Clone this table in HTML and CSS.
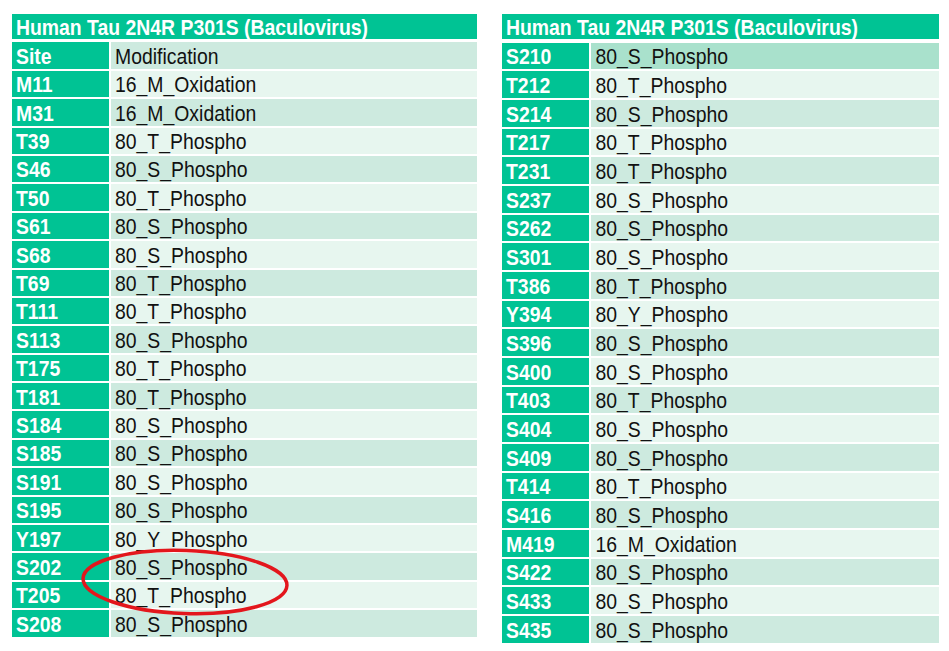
FILE: index.html
```html
<!DOCTYPE html>
<html lang="en">
<head>
<meta charset="utf-8">
<title>Human Tau 2N4R P301S (Baculovirus)</title>
<link rel="stylesheet" href="styles.css">
</head>
<body>
<div class="page">
  <div class="sheet sheet-left">
    <div class="title"><span>Human Tau 2N4R P301S (Baculovirus)</span></div>
    <div class="site"><span>Site</span></div><div class="mod dark"><span>Modification</span></div>
    <div class="site"><span>M11</span></div><div class="mod light"><span>16_M_Oxidation</span></div>
    <div class="site"><span>M31</span></div><div class="mod dark"><span>16_M_Oxidation</span></div>
    <div class="site"><span>T39</span></div><div class="mod light"><span>80_T_Phospho</span></div>
    <div class="site"><span>S46</span></div><div class="mod dark"><span>80_S_Phospho</span></div>
    <div class="site"><span>T50</span></div><div class="mod light"><span>80_T_Phospho</span></div>
    <div class="site"><span>S61</span></div><div class="mod dark"><span>80_S_Phospho</span></div>
    <div class="site"><span>S68</span></div><div class="mod light"><span>80_S_Phospho</span></div>
    <div class="site"><span>T69</span></div><div class="mod dark"><span>80_T_Phospho</span></div>
    <div class="site"><span>T111</span></div><div class="mod light"><span>80_T_Phospho</span></div>
    <div class="site"><span>S113</span></div><div class="mod dark"><span>80_S_Phospho</span></div>
    <div class="site"><span>T175</span></div><div class="mod light"><span>80_T_Phospho</span></div>
    <div class="site"><span>T181</span></div><div class="mod dark"><span>80_T_Phospho</span></div>
    <div class="site"><span>S184</span></div><div class="mod light"><span>80_S_Phospho</span></div>
    <div class="site"><span>S185</span></div><div class="mod dark"><span>80_S_Phospho</span></div>
    <div class="site"><span>S191</span></div><div class="mod light"><span>80_S_Phospho</span></div>
    <div class="site"><span>S195</span></div><div class="mod dark"><span>80_S_Phospho</span></div>
    <div class="site"><span>Y197</span></div><div class="mod light"><span>80_Y_Phospho</span></div>
    <div class="site"><span>S202</span></div><div class="mod dark"><span>80_S_Phospho</span></div>
    <div class="site"><span>T205</span></div><div class="mod light"><span>80_T_Phospho</span></div>
    <div class="site"><span>S208</span></div><div class="mod dark"><span>80_S_Phospho</span></div>
    <svg class="mark" width="465" height="640" viewBox="0 0 465 640" aria-hidden="true">
      <ellipse cx="173" cy="568" rx="102" ry="31.5" fill="none" stroke="#e3161c" stroke-width="3.5" transform="rotate(2 173 568)"/>
    </svg>
  </div>
  <div class="sheet sheet-right">
    <div class="title"><span>Human Tau 2N4R P301S (Baculovirus)</span></div>
    <div class="site"><span>S210</span></div><div class="mod first"><span>80_S_Phospho</span></div>
    <div class="site"><span>T212</span></div><div class="mod light"><span>80_T_Phospho</span></div>
    <div class="site"><span>S214</span></div><div class="mod dark"><span>80_S_Phospho</span></div>
    <div class="site"><span>T217</span></div><div class="mod light"><span>80_T_Phospho</span></div>
    <div class="site"><span>T231</span></div><div class="mod dark"><span>80_T_Phospho</span></div>
    <div class="site"><span>S237</span></div><div class="mod light"><span>80_S_Phospho</span></div>
    <div class="site"><span>S262</span></div><div class="mod dark"><span>80_S_Phospho</span></div>
    <div class="site"><span>S301</span></div><div class="mod light"><span>80_S_Phospho</span></div>
    <div class="site"><span>T386</span></div><div class="mod dark"><span>80_T_Phospho</span></div>
    <div class="site"><span>Y394</span></div><div class="mod light"><span>80_Y_Phospho</span></div>
    <div class="site"><span>S396</span></div><div class="mod dark"><span>80_S_Phospho</span></div>
    <div class="site"><span>S400</span></div><div class="mod light"><span>80_S_Phospho</span></div>
    <div class="site"><span>T403</span></div><div class="mod dark"><span>80_T_Phospho</span></div>
    <div class="site"><span>S404</span></div><div class="mod light"><span>80_S_Phospho</span></div>
    <div class="site"><span>S409</span></div><div class="mod dark"><span>80_S_Phospho</span></div>
    <div class="site"><span>T414</span></div><div class="mod light"><span>80_T_Phospho</span></div>
    <div class="site"><span>S416</span></div><div class="mod dark"><span>80_S_Phospho</span></div>
    <div class="site"><span>M419</span></div><div class="mod light"><span>16_M_Oxidation</span></div>
    <div class="site"><span>S422</span></div><div class="mod dark"><span>80_S_Phospho</span></div>
    <div class="site"><span>S433</span></div><div class="mod light"><span>80_S_Phospho</span></div>
    <div class="site"><span>S435</span></div><div class="mod dark"><span>80_S_Phospho</span></div>
  </div>
</div>
</body>
</html>
```
FILE: styles.css
```css
html, body {
  margin: 0;
  padding: 0;
  background: #ffffff;
}

.page {
  display: flex;
  align-items: flex-start;
  gap: 25px;
  padding: 14px 0 0 12px;
  font-family: "Liberation Sans", Arial, sans-serif;
  font-size: 19.4px;
  color: #111111;
}

.sheet {
  position: relative;
  display: grid;
  column-gap: 2px;
  row-gap: 2px;
}

.sheet-left {
  width: 465px;
  grid-template-columns: 96.5px 1fr;
  grid-auto-rows: 26.4px;
}

.sheet-right {
  width: 437px;
  grid-template-columns: 87px 1fr;
  grid-auto-rows: 26.68px;
}

.title {
  grid-column: 1 / -1;
  height: 25px;
  margin-bottom: 4.5px;
  padding-left: 4px;
  background: #00c394;
  color: #ffffff;
  font-weight: bold;
}

.title,
.site,
.mod {
  display: flex;
  align-items: center;
  white-space: nowrap;
}

.title span,
.site span,
.mod span {
  display: inline-block;
  line-height: 1;
  transform: translateY(1px) scaleY(1.15);
  transform-origin: center 60%;
}

.site {
  padding-left: 4px;
  background: #00c394;
  color: #ffffff;
  font-weight: bold;
}

.mod {
  padding-left: 4.5px;
}

.dark {
  background: #cdeadf;
}

.light {
  background: #e7f6ef;
}

.first {
  background: #a9e1cc;
}

.mark {
  position: absolute;
  left: 0;
  top: 0;
  pointer-events: none;
  overflow: visible;
}
```
